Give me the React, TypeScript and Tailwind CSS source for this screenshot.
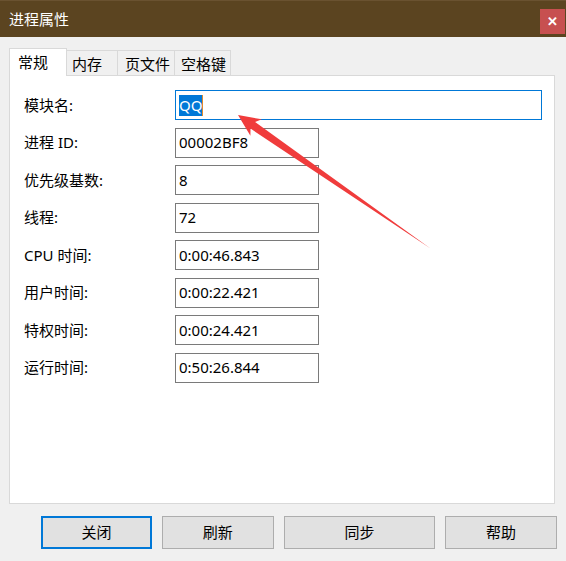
import React from 'react';

const FONT = { fontFamily: '"Noto Sans", "Noto Sans CJK SC", sans-serif' };

const rows = [
  ['进程 ID:', '00002BF8'],
  ['优先级基数:', '8'],
  ['线程:', '72'],
  ['CPU 时间:', '0:00:46.843'],
  ['用户时间:', '0:00:22.421'],
  ['特权时间:', '0:00:24.421'],
  ['运行时间:', '0:50:26.844'],
];

const tabs = [
  { t: '内存', w: 'w-[51px] pl-[5px]' },
  { t: '页文件', w: 'w-[57px] pl-[7px]' },
  { t: '空格键', w: 'w-[56px] pl-[6px]' },
];

const buttons = [
  { t: '关闭', w: 'w-[111px]', focus: true },
  { t: '刷新', w: 'w-[112px]' },
  { t: '同步', w: 'w-[152px]' },
  { t: '帮助', w: 'w-[112px]' },
];

function Arrow() {
  // screenshot annotation arrow, tip at the module name field
  return (
    <svg className="pointer-events-none absolute left-0 top-0" width="566" height="561">
      <polygon
        points="238,115 261.8,119.3 255.1,122 430.5,248.5 250.5,128.6 250.4,135.8"
        fill="#f03c3c"
      />
    </svg>
  );
}

export default function App() {
  return (
    <div className="relative flex h-[561px] w-[566px] flex-col bg-[#f0f0f0] text-[15px] text-black" style={FONT}>
      {/* title bar */}
      <div className="flex h-[37px] items-start justify-between border-t border-[#6a5230] bg-[#5b4420]">
        <span className="mt-[7px] pl-[9px] text-white">进程属性</span>
        <button className="mr-[1px] mt-[8px] flex h-[25px] w-[25px] items-center justify-center bg-[#c75050] text-[13px] font-bold leading-none text-white">
          ✕
        </button>
      </div>

      <div className="flex flex-col px-[9px]">
        {/* tabs */}
        <div className="mt-[11px] flex items-end">
          <div className="relative z-10 -mb-px flex h-[28px] w-[58px] items-start border border-b-0 border-[#d9d9d9] bg-white pl-[8px] pt-[2px]">
            常规
          </div>
          {tabs.map((t) => (
            <div key={t.t} className={`${t.w} flex h-[25px] items-center border border-l-0 border-b-0 border-[#d9d9d9] bg-[#f0f0f0] pt-[2px] leading-none`}>
              {t.t}
            </div>
          ))}
        </div>

        {/* panel */}
        <div className="flex h-[429px] w-[546px] flex-col gap-[7.5px] border border-[#d9d9d9] bg-white pl-[14px] pt-[14px]">
          <div className="flex h-[30px] items-center">
            <span className="w-[151px]">模块名:</span>
            <div className="flex h-[30px] w-[367px] items-center border border-[#0078d7] pl-[3px]">
              <span className="bg-[#0078d7] leading-[21px] text-white">QQ</span>
              <span className="h-[21px] w-px bg-[#e08a2a]" />
            </div>
          </div>
          {rows.map(([label, value]) => (
            <div key={label} className="flex h-[30px] items-center">
              <span className="w-[151px]">{label}</span>
              <div className="flex h-[30px] w-[144px] items-center border border-[#7a7a7a] pl-[3px]">
                {value}
              </div>
            </div>
          ))}
        </div>

        {/* buttons */}
        <div className="mt-[12px] flex gap-[10px] pl-[32px]">
          {buttons.map((b) => (
            <button
              key={b.t}
              className={`${b.w} flex h-[33px] items-center justify-center bg-[#e1e1e1] ${
                b.focus ? 'border-2 border-[#0078d7]' : 'border border-[#adadad]'
              }`}
            >
              {b.t}
            </button>
          ))}
        </div>
      </div>

      <Arrow />
    </div>
  );
}
